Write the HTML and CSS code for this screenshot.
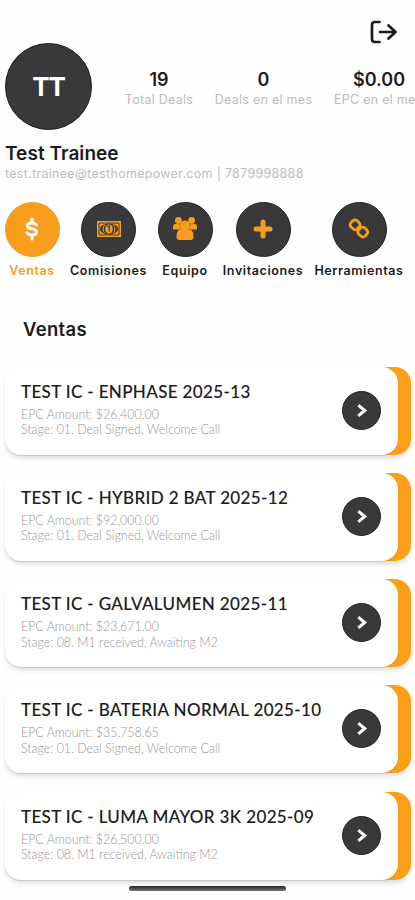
FILE: index.html
```html
<!DOCTYPE html>
<html lang="es">
<head>
<meta charset="utf-8">
<title>Ventas</title>
<link rel="stylesheet" href="styles.css">
</head>
<body>
<main class="app">
  <header class="topbar">
    <svg class="logout" viewBox="0 0 28 24"><path d="M9.5 2H5Q2 2 2 5V19Q2 22 5 22H9.5M10 12H25.5M18.5 5.5L25.5 12L18.5 18.5"/></svg>
  </header>
  <section class="profile">
    <div class="avatar">TT</div>
    <div class="stats">
      <div class="stat"><b>19</b><span>Total Deals</span></div>
      <div class="stat month"><b>0</b><span>Deals en el mes</span></div>
      <div class="stat epc"><b>$0.00</b><span>EPC en el mes</span></div>
    </div>
  </section>
  <h1 class="name">Test Trainee</h1>
  <p class="contact">test.trainee@testhomepower.com | 7879998888</p>
  <nav class="nav">
    <a class="item active"><span class="circle"><svg viewBox="0 0 28 28"><path class="line" stroke-width="3.1" d="M18.4 9.8Q16.6 8 14 8C7.8 8 8.2 13 13.8 13.8C20.2 14.8 19.8 20 14 20Q11 20 9 18M14 4V8M14 20V24"/></svg></span><span class="label">Ventas</span></a>
    <a class="item wide"><span class="circle"><svg viewBox="0 0 28 28"><path class="fill" d="M2 6H26V22H2Z"/><path class="dark" stroke-width="1" d="M4 8H24V20H4Z"/><ellipse class="hole" cx="14" cy="14" rx="9" ry="5.6"/><path class="line" stroke-width="1" d="M9.5 10Q6.5 14 9.5 18M18.5 10Q21.5 14 18.5 18"/><ellipse class="fill" cx="14" cy="14" rx="3.8" ry="4.6"/><path class="dark" stroke-width="1.3" d="M12.5 12L14.2 11V16.5"/></svg></span><span class="label">Comisiones</span></a>
    <a class="item"><span class="circle"><svg viewBox="0 0 28 28"><circle class="fill" cx="7.4" cy="5.5" r="3.4"/><circle class="fill" cx="20.6" cy="5.5" r="3.4"/><path class="fill" d="M2 14.5V12Q2 9 4.5 9H8.5Q8.5 12 10.5 14.5ZM26 14.5V12Q26 9 23.5 9H19.5Q19.5 12 17.5 14.5Z"/><circle class="fill" cx="14" cy="10.5" r="5"/><path class="fill" d="M5.5 22C5.5 17.5 7 14.3 10 14.3H18C21 14.3 22.5 17.5 22.5 22Q22.5 25 19.5 25H8.5Q5.5 25 5.5 22Z"/></svg></span><span class="label">Equipo</span></a>
    <a class="item wider"><span class="circle"><svg viewBox="0 0 28 28"><path class="line" stroke-width="5" d="M14 7V21M7 14H21"/></svg></span><span class="label">Invitaciones</span></a>
    <a class="item widest"><span class="circle"><svg viewBox="0 0 28 28"><g class="line" stroke-width="2.8" transform="rotate(43 14 13.5)"><rect x="4.2" y="9.2" width="8.8" height="8.6" rx="2.8"/><rect x="14.8" y="9.2" width="8.8" height="8.6" rx="2.8"/></g></svg></span><span class="label">Herramientas</span></a>
  </nav>
  <h2 class="heading">Ventas</h2>
  <section class="deals">
    <article class="deal"><div class="card"><div class="text"><h3>TEST IC - ENPHASE 2025-13</h3><p>EPC Amount: $26,400.00</p><p>Stage: 01. Deal Signed, Welcome Call</p></div><span class="go"><svg viewBox="0 0 12 14"><path d="M3 2L9 7L3 12"/></svg></span></div></article>
    <article class="deal"><div class="card"><div class="text"><h3>TEST IC - HYBRID 2 BAT 2025-12</h3><p>EPC Amount: $92,000.00</p><p>Stage: 01. Deal Signed, Welcome Call</p></div><span class="go"><svg viewBox="0 0 12 14"><path d="M3 2L9 7L3 12"/></svg></span></div></article>
    <article class="deal"><div class="card"><div class="text"><h3>TEST IC - GALVALUMEN 2025-11</h3><p>EPC Amount: $23,671.00</p><p>Stage: 08. M1 received, Awaiting M2</p></div><span class="go"><svg viewBox="0 0 12 14"><path d="M3 2L9 7L3 12"/></svg></span></div></article>
    <article class="deal"><div class="card"><div class="text"><h3>TEST IC - BATERIA NORMAL 2025-10</h3><p>EPC Amount: $35,758.65</p><p>Stage: 01. Deal Signed, Welcome Call</p></div><span class="go"><svg viewBox="0 0 12 14"><path d="M3 2L9 7L3 12"/></svg></span></div></article>
    <article class="deal"><div class="card"><div class="text"><h3>TEST IC - LUMA MAYOR 3K 2025-09</h3><p>EPC Amount: $26,500.00</p><p>Stage: 08. M1 received, Awaiting M2</p></div><span class="go"><svg viewBox="0 0 12 14"><path d="M3 2L9 7L3 12"/></svg></span></div></article>
  </section>
  <div class="home-indicator"></div>
</main>
</body>
</html>
```
FILE: styles.css
```css
* { box-sizing: border-box; }
body { margin: 0; background: #fefefe; color: #1c1c1e; font-family: Inter, "Liberation Sans", sans-serif; }
h1, h2, h3, p { margin: 0; }
.app { position: relative; width: 415px; height: 900px; overflow: hidden; padding-left: 5px; }
.topbar { height: 43px; display: flex; justify-content: flex-end; padding: 20px 17px 0 0; }
.logout { width: 28px; height: 24px; fill: none; stroke: #1c1c1e; stroke-width: 2.7; stroke-linecap: round; stroke-linejoin: round; }
.profile { display: flex; height: 88px; }
.avatar { width: 87px; height: 87px; flex: none; border-radius: 50%; background: #39393b; border: 1px solid #1d1d1f; color: #fff; display: flex; align-items: center; justify-content: center; font-size: 26px; font-weight: 700; letter-spacing: -1px; }
.stats { display: flex; flex: none; gap: 22px; margin-left: 33px; padding-top: 24.5px; }
.stat { width: 68px; display: flex; flex-direction: column; align-items: center; white-space: nowrap; }
.month { width: 97px; }
.epc { width: 90px; align-items: flex-start; }
.epc b { align-self: center; }
.stat b { font-size: 18px; line-height: 23px; font-weight: 600; }
.stat span { font-size: 12.5px; line-height: 17px; color: #bcbcbe; font-weight: 400; letter-spacing: .27px; }
.name { font-size: 19px; line-height: 24px; font-weight: 600; margin-top: 11px; letter-spacing: .05px; }
.contact { font-size: 12.5px; line-height: 16px; color: #bdbdbf; font-weight: 400; letter-spacing: .3px; white-space: nowrap; }
.nav { display: flex; gap: 11.5px; margin-top: 19.5px; }
.item { width: 54px; flex: none; display: flex; flex-direction: column; align-items: center; }
.wide { width: 76px; }
.wider { width: 79px; }
.widest { width: 90px; }
.circle { width: 55px; height: 55px; flex: none; border-radius: 50%; background: #39393b; border: 1px solid #222224; color: #f99d1c; display: flex; align-items: center; justify-content: center; }
.circle svg { width: 28px; height: 28px; }
.active .circle { background: #f99d1c; border-color: #f99d1c; color: #fff; }
.line { fill: none; stroke: currentColor; stroke-linecap: round; stroke-linejoin: round; }
.fill { fill: currentColor; }
.dark { fill: none; stroke: #39393b; }
.hole { fill: #39393b; }
.label { font-size: 12.5px; line-height: 18px; margin-top: 5px; font-weight: 600; letter-spacing: .6px; white-space: nowrap; }
.active .label { color: #f99d1c; }
.heading { font-size: 18.5px; line-height: 24px; font-weight: 600; letter-spacing: .3px; margin: 37px 0 0 18px; }
.deals { display: flex; flex-direction: column; gap: 18.2px; margin-top: 26.3px; }
.deal { width: 406px; height: 88px; flex: none; border-radius: 16px; background: linear-gradient(90deg, transparent 50%, #fb9f18 50%); box-shadow: 0 4px 5px -1px rgba(0,0,0,.13); }
.card { width: 393px; height: 88px; border-radius: 16px; background: #fff; display: flex; justify-content: space-between; padding: 14px 17px 0 16px; box-shadow: 0 1px 1px rgba(0,0,0,.12); }
.text { white-space: nowrap; width: 310px; }
h3 { font: 500 17px/21px Lato, sans-serif; letter-spacing: .36px; -webkit-text-stroke: .1px currentColor; margin-bottom: 4px; }
.text p { font: 300 14.5px/15.5px Lato, sans-serif; color: #969698; transform: scaleX(.855); transform-origin: left; }
.go { width: 39px; height: 39px; margin-top: 10px; border-radius: 50%; background: #39393b; border: 1px solid #222224; display: flex; align-items: center; justify-content: center; }
.go svg { width: 13px; height: 15px; fill: none; stroke: #fff; stroke-width: 2.8; }
.home-indicator { position: absolute; left: 129px; top: 886px; width: 157px; height: 5px; border-radius: 3px; background: linear-gradient(#242424, #777); }
```
